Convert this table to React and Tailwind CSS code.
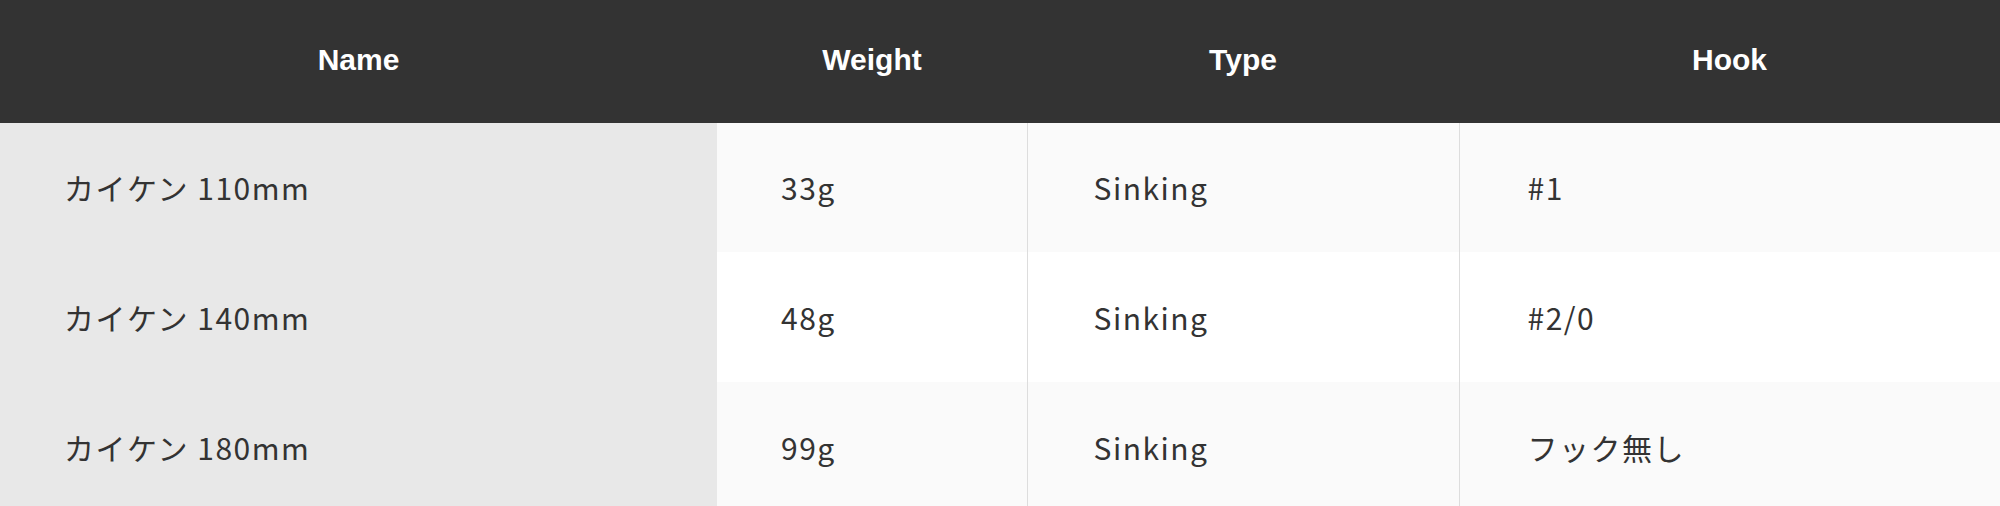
const rows = [
  { name: "カイケン 110mm", weight: "33g", type: "Sinking", hook: "#1", bg: "bg-[#fafafa]", h: "h-[129px]" },
  { name: "カイケン 140mm", weight: "48g", type: "Sinking", hook: "#2/0", bg: "bg-white", h: "h-[130px]" },
  { name: "カイケン 180mm", weight: "99g", type: "Sinking", hook: "フック無し", bg: "bg-[#fafafa]", h: "h-[130px]" },
];

export default function App() {
  return (
    <div className="w-[2000px] h-[506px] overflow-hidden bg-white">
      <table className="w-full border-collapse table-fixed">
        <colgroup>
          <col className="w-[717px]" />
          <col className="w-[310px]" />
          <col className="w-[432px]" />
          <col />
        </colgroup>
        {/* ヘッダー */}
        <thead>
          <tr className="h-[123px] bg-[#333333] text-white font-['Liberation_Sans',Arial,sans-serif] text-[30px] font-bold">
            <th className="text-center pb-[4px]">Name</th>
            <th className="text-center pb-[4px]">Weight</th>
            <th className="text-center pb-[4px]">Type</th>
            <th className="text-center pb-[4px]">Hook</th>
          </tr>
        </thead>
        <tbody className="font-['Noto_Sans_CJK_JP',sans-serif] text-[30px] tracking-[0.05em] text-[#333333]">
          {rows.map((r) => (
            <tr key={r.name} className={`${r.h} ${r.bg}`}>
              <td className="bg-[#e8e8e8] pl-[64px]">{r.name}</td>
              <td className="pl-[64px]">{r.weight}</td>
              <td className="pl-[66px] border-l border-[#dddddd]">{r.type}</td>
              <td className="pl-[68px] border-l border-[#dddddd]">{r.hook}</td>
            </tr>
          ))}
        </tbody>
      </table>
    </div>
  );
}
